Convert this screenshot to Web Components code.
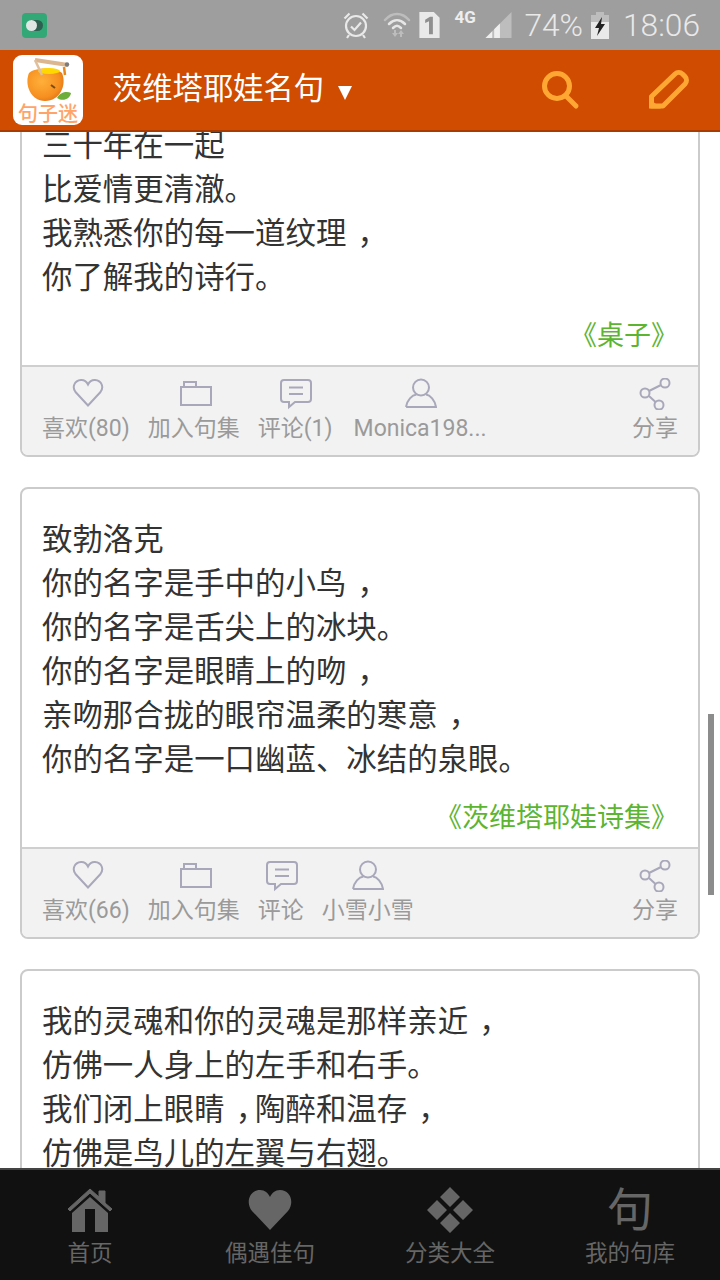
<!DOCTYPE html>
<html lang="zh-CN"><head><meta charset="utf-8"><title>茨维塔耶娃名句</title>
<style>
html,body{margin:0;padding:0;background:#fff}
body{font-family:Roboto,"Noto Sans CJK SC",sans-serif}
</style></head><body>
<app-screen>
  <status-bar slot="status"></status-bar>
  <app-bar slot="bar" title-text="茨维塔耶娃名句"></app-bar>
  <quote-card style="margin-top:-39px" source="《桌子》">
    <p-line>三十年在一起</p-line><p-line>比爱情更清澈。</p-line><p-line>我熟悉你的每一道纹理<c-ma>，</c-ma></p-line><p-line>你了解我的诗行。</p-line>
    <action-item slot="actions" icon="heart" nudge="4">喜欢(80)</action-item>
    <action-item slot="actions" icon="folder" nudge="4">加入句集</action-item>
    <action-item slot="actions" icon="comment" nudge="2">评论(1)</action-item>
    <action-item slot="actions" icon="user" nudge="2" style="margin-left:3px">Monica198...</action-item>
    <action-item slot="share" icon="share">分享</action-item>
  </quote-card>
  <quote-card source="《茨维塔耶娃诗集》">
    <p-line>致勃洛克</p-line><p-line>你的名字是手中的小鸟<c-ma>，</c-ma></p-line><p-line>你的名字是舌尖上的冰块。</p-line><p-line>你的名字是眼睛上的吻<c-ma>，</c-ma></p-line><p-line>亲吻那合拢的眼帘温柔的寒意<c-ma>，</c-ma></p-line><p-line>你的名字是一口幽蓝、冰结的泉眼。</p-line>
    <action-item slot="actions" icon="heart" nudge="4">喜欢(66)</action-item>
    <action-item slot="actions" icon="folder" nudge="4">加入句集</action-item>
    <action-item slot="actions" icon="comment" nudge="2">评论</action-item>
    <action-item slot="actions" icon="user">小雪小雪</action-item>
    <action-item slot="share" icon="share">分享</action-item>
  </quote-card>
  <quote-card>
    <p-line>我的灵魂和你的灵魂是那样亲近<c-ma>，</c-ma></p-line><p-line>仿佛一人身上的左手和右手。</p-line><p-line>我们闭上眼睛<c-ma>，</c-ma>陶醉和温存<c-ma>，</c-ma></p-line><p-line>仿佛是鸟儿的左翼与右翅。</p-line>
  </quote-card>
  <bottom-nav slot="nav">
    <nav-item icon="home">首页</nav-item>
    <nav-item icon="heart">偶遇佳句</nav-item>
    <nav-item icon="grid">分类大全</nav-item>
    <nav-item icon="ju">我的句库</nav-item>
  </bottom-nav>
</app-screen>
<script>
const def=(name,html,extra)=>{customElements.define(name,class extends HTMLElement{
  constructor(){super();this.attachShadow({mode:'open'}).innerHTML=html;}
  connectedCallback(){extra&&extra(this,this.shadowRoot);}
});};

def('app-screen',`<style>
:host{display:flex;flex-direction:column;width:720px;height:1280px;overflow:hidden;position:relative;background:#fff}
.c{flex:1;min-height:0;overflow:hidden;display:flex;flex-direction:column;gap:30px;padding:0 20px;}
.sb{position:absolute;left:708px;top:714px;width:6px;height:181px;background:#8c8c8c}
</style><slot name="status"></slot><slot name="bar"></slot><div class="c"><slot></slot></div><slot name="nav"></slot><div class="sb"></div>`);

def('status-bar',`<style>
:host{display:flex;align-items:center;height:50px;flex:none;background:#9e9e9e;color:#e9e9e9;font:300 31.7px Roboto,sans-serif;position:relative}
.app{width:25px;height:25px;margin-left:22px;border-radius:4px;background:#33a877;position:relative}
.app i{position:absolute;left:5px;top:7px;width:16px;height:11px;border-radius:6px;background:#2f5f50}
.app b{position:absolute;left:4px;top:7px;width:11px;height:11px;border-radius:50%;background:#dfe6e3}
.r{margin-left:auto;display:flex;align-items:center;height:50px;padding-right:20px}
svg{display:block;flex:none}
.g{font:700 17px Roboto,sans-serif;width:22px;margin-left:14px;align-self:flex-start;margin-top:7px;color:#eee;white-space:nowrap}
</style><div class="app"><i></i><b></b></div>
<div class="r">
<svg width="26" height="28" viewBox="0 0 26 28" fill="none" stroke="#e9e9e9" stroke-width="2.2" style="margin-top:-1px"><circle cx="13" cy="15" r="10"/><path d="M8 15.5l3.5 3.5 6.5-7.5M1.5 7.5l5-5M24.500 7.500l-5-5M6 24l-2 3M20 24l2 3"/></svg>
<svg width="28" height="28" viewBox="0 0 28 28" style="margin-left:14px"><g fill="none" stroke-linecap="round"><path d="M2 9C9 1 19 1 26 9" stroke="#bdbdbd" stroke-width="2.500"/><path d="M6 13c5-5 11-5 16 0" stroke="#e6e6e6" stroke-width="2.500"/><path d="M10 17c3-3 5-3 8 0" stroke="#e6e6e6" stroke-width="2.500"/></g><path d="M9 21h2v3h2l-3 4-3-4h2zM17 28h-2v-3h-2l3-4 3 4h-2z" fill="#bdbdbd" transform="translate(2 -2)"/></svg>
<svg width="21" height="26" viewBox="0 0 21 27" style="margin-left:8px"><path d="M0 0H15L21 6V27H0z" fill="#e9e9e9"/><path d="M6 8l5-3h3v18H10V9.500L6 11.500z" fill="#8f8f8f"/></svg>
<span class="g">4G</span>
<svg width="27" height="26" viewBox="0 0 27 27" style="margin-left:9px;margin-top:-1px"><path d="M27 0V27H0z" fill="#bdbdbd"/><path d="M0 27L7 20V27zM9 18L15 12V27H9z" fill="#eeeeee"/></svg>
<span style="margin-left:12px">74%</span>
<svg width="18" height="27" viewBox="0 0 18 27" style="margin-left:8px"><path d="M5 0H13V3H18V27H0V3H5z" fill="#bdbdbd"/><path d="M0 10H18V27H0z" fill="#e9e9e9"/><path d="M11 5L4 16H8L6 24L14 12H10z" fill="#222"/></svg>
<span style="margin-left:14px">18:06</span>
</div>`);

def('app-bar',`<style>
:host{display:flex;align-items:center;height:82px;box-sizing:border-box;flex:none;background:#cf4c00;border-bottom:2px solid #a83c00;color:#fff;font:400 30.3px Roboto,"Noto Sans CJK SC",sans-serif}
svg{display:block;flex:none}
.logo{margin-left:13px;overflow:visible}
.t{margin-left:29px;white-space:nowrap;margin-bottom:8px}
.tri{margin-left:14px;margin-top:6px}
.s{margin-left:auto}
.p{margin-left:68px;margin-right:30px}
</style>
<svg class="logo" width="70" height="70" viewBox="0 0 70 70">
<rect width="70" height="70" rx="9" fill="#fff"/>
<defs><radialGradient id="o" cx=".4" cy=".4" r=".7"><stop offset="0" stop-color="#ffb03a"/><stop offset=".7" stop-color="#f68f20"/><stop offset="1" stop-color="#dd6f12"/></radialGradient></defs>
<path d="M16 18C22 12 42 12 49 18C54 30 47 46 32 46C18 46 11 30 16 18Z" fill="url(#o)"/>
<ellipse cx="36" cy="16" rx="11" ry="3" fill="#ffd800"/>
<path d="M22 5L55 10" stroke="#dcb68e" stroke-width="4"/><path d="M22 5L29 20" stroke="#e0bf9c" stroke-width="2.500"/>
<circle cx="54" cy="9.500" r="2.200" fill="#7b7b7b"/><path d="M51 12L52 20" stroke="#e8871b" stroke-width="2.500"/>
<path d="M44 43C47 37 54 36 58 38C57 44 50 47 44 43Z" fill="#6dae3a"/><path d="M38 30L42 33" stroke="#7a4a12" stroke-width="2"/>
<text x="35" y="66" text-anchor="middle" font-family="Noto Sans CJK SC" font-size="20" font-weight="500" fill="#ffa469">句子迷</text>
</svg>
<span class="t"></span>
<svg class="tri" width="14" height="14" viewBox="0 0 14 14"><path d="M0 0H14L7 14Z" fill="#fff"/></svg>
<svg class="s" width="40" height="40" viewBox="0 0 40 40" fill="none" stroke="#ffa733" stroke-width="5"><circle cx="17" cy="16" r="12.500"/><path d="M26 26L36 36" stroke-linecap="round"/></svg>
<svg class="p" width="42" height="42" viewBox="0 0 42 42"><path d="M3.500 37V27.500L27 5a5.500 5.500 0 0 1 7.500 0l2.500 2.500a5.500 5.500 0 0 1 0 7.500L15 37Z" fill="none" stroke="#ffa733" stroke-width="5" stroke-linejoin="round"/><path d="M1 39.500V29L13 39.500Z" fill="#ffa733"/></svg>`,
(el,r)=>{r.querySelector('.t').textContent=el.getAttribute('title-text');});

def('p-line',`<style>:host{display:block;height:44px;line-height:44px;white-space:nowrap}</style><slot></slot>`);
def('c-ma',`<style>:host{display:inline;padding-left:11px;letter-spacing:-11px}</style><slot></slot>`);

def('quote-card',`<style>
:host{display:block;flex:none;box-sizing:border-box;width:680px;background:#fff;border:2px solid #cbcbcb;border-radius:8px;overflow:hidden;color:#333;font:400 30.45px Roboto,"Noto Sans CJK SC",sans-serif}
.b{padding:29px 20px 0}
.src{text-align:right;color:#5cb531;font-size:27px;line-height:44px;height:44px;margin-top:14px;white-space:nowrap}
.f{display:flex;gap:18px;height:88px;margin-top:7px;padding:0 20px;background:#f2f2f2;border-top:2px solid #cfcfcf;box-sizing:content-box}
.a{display:flex;gap:18px}.sh{margin-left:auto}
</style><div class="b"><slot></slot><div class="src"></div></div>
<div class="f"><div class="a"><slot name="actions"></slot></div><div class="sh"><slot name="share"></slot></div></div>`,
(el,r)=>{r.querySelector('.src').textContent=el.getAttribute('source')||'';if(!el.hasAttribute('source'))r.querySelector('.f').style.display='none';});

const AI={
heart:'<path d="M16 27.500L3.500 14C0 9.500 2 2.500 9 2c3.500-.2 5.500 1.500 7 4.500C17.500 3.500 19.500 1.800 23 2c7 .5 9 7.500 5.500 12Z"/>',
folder:'<path d="M1 9H31V27H1ZM4 9V4H16V9"/>',
comment:'<path d="M4 2H28Q31 2 31 5V21Q31 24 28 24H15L9 29V24H4Q1 24 1 21V5Q1 2 4 2ZM9 9.500H23M9 16H23"/>',
user:'<circle cx="16" cy="9.500" r="8"/><path d="M1 29C2 22 7 17 11.500 16.500M21 16.500C25 17 30 22 31 29H1"/>',
share:'<circle cx="26" cy="5" r="4.500"/><circle cx="6" cy="15" r="4.500"/><circle cx="20" cy="27" r="4.500"/><path d="M10 13L22 7M10 18L16.500 24"/>'};
def('action-item',`<style>
:host{display:flex;flex-direction:column;align-items:center;color:#9a9a9a;font:400 23px Roboto,"Noto Sans CJK SC",sans-serif;white-space:nowrap;flex:none}
svg{display:block;margin-top:11px;fill:none;stroke:#a9a8bb;stroke-width:2}
.l{line-height:32px;margin-top:3px}
</style><svg width="32" height="32" viewBox="0 0 32 32"></svg><div class="l"><slot></slot></div>`,
(el,r)=>{const s=r.querySelector('svg');s.innerHTML=AI[el.getAttribute('icon')];if(el.hasAttribute('nudge'))s.style.marginLeft=el.getAttribute('nudge')+'px';});

def('bottom-nav',`<style>
:host{display:grid;grid-template-columns:repeat(4,180px);height:112px;box-sizing:border-box;flex:none;background:#111;border-top:2px solid #444}
</style><slot></slot>`);

const NI={
home:'<svg width="46" height="46" viewBox="0 0 46 46"><path d="M1 22L23 2L32 10V4H38V16L45 22L43 24L23 6L3 24Z" fill="#666" stroke="#666" stroke-linejoin="round"/><path d="M5 26L23 10L41 26V45H28V26H18V45H5Z" fill="#666"/><path d="M18 22H28V26H18Z" fill="#111"/></svg>',
heart:'<svg width="46" height="46" viewBox="0 0 46 46"><path d="M23 43L5 24C-2 15 3 3 13 3C18 3 21 6 23 10C25 6 28 3 33 3C43 3 48 15 41 24Z" fill="#666"/></svg>',
grid:'<svg width="46" height="46" viewBox="0 0 46 46" fill="#666"><path d="M23 0L33 10L23 20L13 10ZM10 13L20 23L10 33L0 23ZM36 13L46 23L36 33L26 23ZM23 26L33 36L23 46L13 36Z"/></svg>',
ju:'<span style="display:block;width:46px;height:46px;font-size:46px;line-height:46px;color:#666;text-align:center">句</span>'};
def('nav-item',`<style>
:host{display:flex;flex-direction:column;align-items:center;color:#666;font:400 22.500px Roboto,"Noto Sans CJK SC",sans-serif}
.i{margin-top:17px;height:46px}.i svg{display:block}
.l{line-height:32px;margin-top:4px;white-space:nowrap}
</style><div class="i"></div><div class="l"><slot></slot></div>`,
(el,r)=>{r.querySelector('.i').innerHTML=NI[el.getAttribute('icon')];});
</script>
</body></html>
